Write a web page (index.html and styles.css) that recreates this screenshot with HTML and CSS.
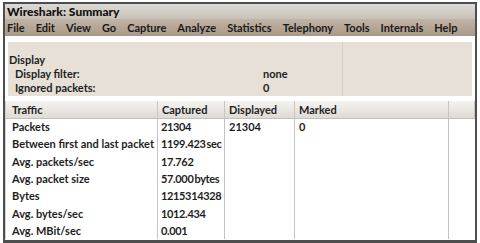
FILE: index.html
```html
<!DOCTYPE html>
<html>
<head>
<title>Wireshark: Summary</title>
<link rel="stylesheet" href="styles.css">
</head>
<body>
<div class="window">
  <div class="titlebar">Wireshark: Summary</div>
  <div class="menubar">
    <span>File</span>
    <span>Edit</span>
    <span>View</span>
    <span>Go</span>
    <span>Capture</span>
    <span>Analyze</span>
    <span>Statistics</span>
    <span>Telephony</span>
    <span>Tools</span>
    <span>Internals</span>
    <span>Help</span>
  </div>
  <div class="content">
    <div class="display-panel">
      <div class="section-title">Display</div>
      <div class="info-row"><span class="label">Display filter:</span><span class="value">none</span></div>
      <div class="info-row"><span class="label">Ignored packets:</span><span class="value">0</span></div>
    </div>
    <table class="traffic">
      <thead>
        <tr><th class="c1">Traffic</th><th class="c2">Captured</th><th class="c3">Displayed</th><th class="c4">Marked</th><th class="c5"></th></tr>
      </thead>
      <tbody>
        <tr><td>Packets</td><td>21304</td><td>21304</td><td>0</td><td></td></tr>
        <tr><td>Between first and last packet</td><td>1199.423&#8201;sec</td><td></td><td></td><td></td></tr>
        <tr><td>Avg. packets/sec</td><td>17.762</td><td></td><td></td><td></td></tr>
        <tr><td>Avg. packet size</td><td>57.000&#8201;bytes</td><td></td><td></td><td></td></tr>
        <tr><td>Bytes</td><td>1215314328</td><td></td><td></td><td></td></tr>
        <tr><td>Avg. bytes/sec</td><td>1012.434</td><td></td><td></td><td></td></tr>
        <tr><td>Avg. MBit/sec</td><td>0.001</td><td></td><td></td><td></td></tr>
      </tbody>
    </table>
  </div>
</div>
</body>
</html>
```

FILE: styles.css
```css
body {
    margin: 0;
    background: #ffffff;
    font-family: Lato, "Open Sans", sans-serif;
    font-weight: bold;
    color: #1e1e1e;
}
.window {
    margin: 2px 3px 0 3px;
    height: 236px;
    border: 2px solid #4e4e4e;
    border-bottom-width: 3px;
    background: #ffffff;
    overflow: hidden;
}
.titlebar {
    height: 15px;
    line-height: 15px;
    padding-left: 2px;
    font-size: 12px;
    font-weight: 900;
    color: #101010;
    background: linear-gradient(#dcdad6, #c9c1b6);
}
.menubar {
    height: 17px;
    display: flex;
    align-items: center;
    gap: 11px;
    padding-left: 2px;
    font-size: 11px;
    color: #1a1a1a;
    background: linear-gradient(#c0b5a8, #a99887);
}
.content {
    padding-top: 6px;
}
.display-panel {
    margin: 0 3px 0 3px;
    height: 43px;
    padding: 11px 0 0 1px;
    font-size: 11px;
    line-height: 14px;
    background: linear-gradient(to right, transparent 334px, #d9d1c6 334px, #d9d1c6 335px, transparent 335px), #e7e0d7;
}
.info-row {
    display: grid;
    grid-template-columns: 248px 1fr;
    padding-left: 6px;
}
.traffic {
    margin-top: 5px;
    width: 100%;
    border-collapse: collapse;
    table-layout: fixed;
    font-size: 11px;
}
.traffic th, .traffic td {
    box-sizing: border-box;
    height: 17.33px;
    padding: 0 0 0 4px;
    text-align: left;
    white-space: nowrap;
    overflow: hidden;
    border-left: 1px solid #c4c4c4;
}
.traffic td:nth-child(2) {
    padding-left: 3px;
    letter-spacing: -0.35px;
}
.traffic th {
    height: 17px;
    font-weight: bold;
    background: linear-gradient(#f4f3f1, #dedad5);
    border-left: 1px solid #f8f8f8;
    border-right: 1px solid #c8c4bf;
    border-bottom: 1px solid #c4bfb9;
}
.traffic th:first-child, .traffic td:first-child {
    padding-left: 6px;
    border-left: 1px solid #d0d0d0;
}
.c1 { width: 152px; }
.c2 { width: 67px; }
.c3 { width: 70px; }
.c4 { width: 154px; }
```
